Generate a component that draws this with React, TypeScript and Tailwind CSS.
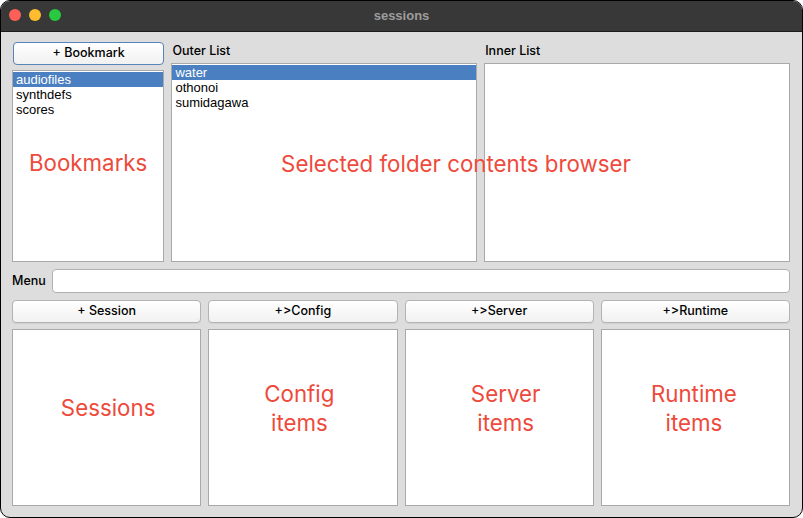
const RED = "text-[#ee4a3c]";

function ListBox({items, selected, className}: {items: string[]; selected?: number; className: string}) {
    return (
        <div className={`bg-white border border-[#a9a9a9] pt-px ${className}`}>
            {items.map((item, i) => (
                <div key={item}
                     className={`h-[15px] leading-[15px] px-[3px] text-[13px] ${i === selected ? "bg-[#4a7fc1] text-white" : "text-black"}`}>
                    {item}
                </div>
            ))}
        </div>
    );
}

function PushButton({label}: {label: string}) {
    return (
        <button
            className="h-[23px] rounded-[4px] border border-[#b3b3b3] bg-gradient-to-b from-white to-[#f1f1f1] text-[12.5px] font-medium font-['Inter',sans-serif] text-black shadow-[0_1px_0_rgba(0,0,0,0.06)]">
            {label}
        </button>
    );
}

function Panel({lines, shift}: {lines: string[]; shift: string}) {
    return (
        <div className={`bg-white border border-[#a9a9a9] flex flex-col items-center justify-center pb-5 ${shift}`}>
            {lines.map(l => (
                <div key={l} className={`text-[22.3px] leading-[29px] font-['Inter',sans-serif] ${RED}`}>{l}</div>
            ))}
        </div>
    );
}

export default function App() {
    return (
        <div className="w-[803px] h-[518px] bg-white font-['Liberation_Sans',Arial,sans-serif]">
            <div className="w-full h-full rounded-[10px] border border-black overflow-hidden flex flex-col bg-[#dddddd]">
                {/* title bar */}
                <div className="h-[31px] shrink-0 bg-[#383838] border-b border-[#1c1c1c] relative flex items-center justify-center">
                    <div className="absolute left-[8px] top-[8px] flex gap-[8px]">
                        <span className="w-[12px] h-[12px] rounded-full bg-[#fe5f57]"/>
                        <span className="w-[12px] h-[12px] rounded-full bg-[#febc2e]"/>
                        <span className="w-[12px] h-[12px] rounded-full bg-[#28c840]"/>
                    </div>
                    <span className="text-[13px] font-bold text-[#9d9d9d]">sessions</span>
                </div>

                <div className="flex-1 flex flex-col pt-[10px] pl-[11px] pr-[12px]">
                    {/* top: bookmarks + browsers */}
                    <div className="relative flex gap-[7px] h-[220px]">
                        <div className="w-[153px] flex flex-col gap-[5px]">
                            <button
                                className="h-[23px] ml-px rounded-[4px] border border-[#5a83b8] bg-gradient-to-b from-white to-[#f1f1f1] text-[12.5px] font-medium font-['Inter',sans-serif] text-black">
                                + Bookmark
                            </button>
                            <div className="relative flex-1 flex">
                                <ListBox className="flex-1" items={["audiofiles", "synthdefs", "scores"]} selected={0}/>
                                <div className={`absolute inset-0 flex items-center justify-center pb-[6px] text-[22.3px] font-['Inter',sans-serif] ${RED}`}>
                                    Bookmarks
                                </div>
                            </div>
                        </div>
                        <div className="w-[307px] flex flex-col">
                            <div className="h-[21px] pl-px text-[12.5px] font-medium font-['Inter',sans-serif] text-black">Outer List</div>
                            <ListBox className="flex-1" items={["water", "othonoi", "sumidagawa"]} selected={0}/>
                        </div>
                        <div className="w-[307px] flex flex-col">
                            <div className="h-[21px] pl-px text-[12.5px] font-medium font-['Inter',sans-serif] text-black">Inner List</div>
                            <ListBox className="flex-1" items={[]}/>
                        </div>
                        <div className={`absolute left-[268px] top-[105px] w-[352px] text-center text-[22.3px] font-['Inter',sans-serif] ${RED}`}>
                            Selected folder contents browser
                        </div>
                    </div>

                    {/* menu */}
                    <div className="flex items-center gap-[5px] mt-[7px] h-[24px]">
                        <span className="w-[35px] text-[12.5px] font-medium font-['Inter',sans-serif] text-black">Menu</span>
                        <div className="flex-1 h-[24px] rounded-[4px] border border-[#b0b0b0] bg-white"/>
                    </div>

                    {/* buttons */}
                    <div className="grid grid-cols-4 gap-[7px] mt-[7px]">
                        <PushButton label="+ Session"/>
                        <PushButton label="+>Config"/>
                        <PushButton label="+>Server"/>
                        <PushButton label="+>Runtime"/>
                    </div>

                    {/* panels */}
                    <div className="grid grid-cols-4 gap-[7px] mt-[6px] h-[177px]">
                        <Panel lines={["Sessions"]} shift="pl-[3px]"/>
                        <Panel lines={["Config", "items"]} shift="pr-[7px]"/>
                        <Panel lines={["Server", "items"]} shift="pl-[13px]"/>
                        <Panel lines={["Runtime", "items"]} shift="pr-[3px]"/>
                    </div>
                </div>
            </div>
        </div>
    );
}
